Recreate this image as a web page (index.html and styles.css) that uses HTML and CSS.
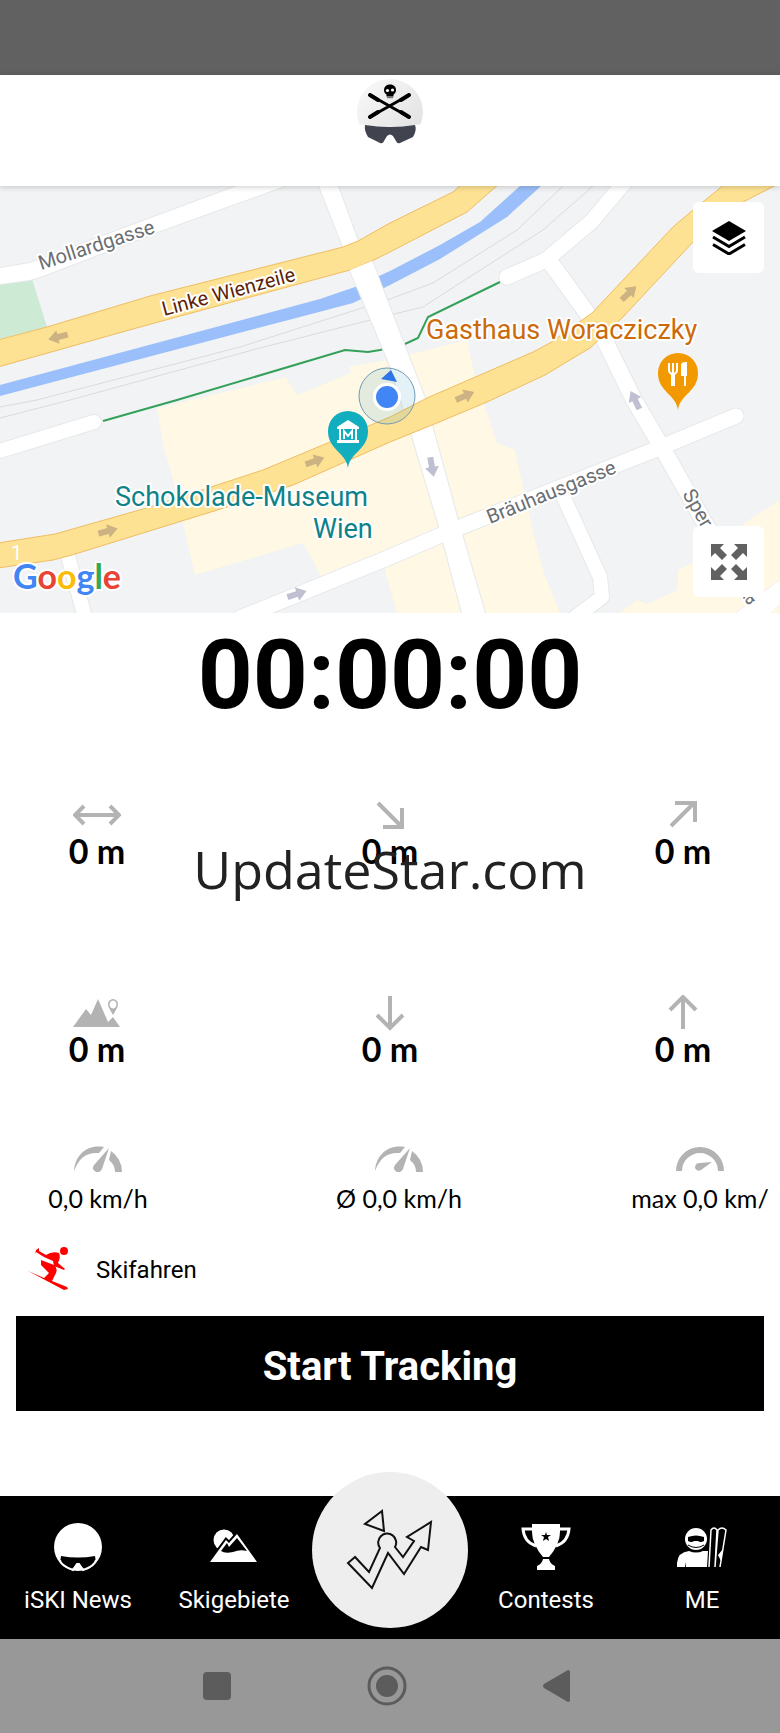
FILE: index.html
```
<!DOCTYPE html>
<html lang="de">
<head>
    <meta charset="UTF-8">
    <meta name="viewport" content="width=device-width, initial-scale=1.0">
    <title>iSKI Tracker</title>
    <link rel="stylesheet" href="styles.css">
</head>
<body>

    <div class="status-bar"></div>

    <header class="header">
        <svg class="logo" viewBox="0 0 66 68" role="img" aria-label="iSKI">
            <defs>
                <linearGradient id="logo-bg" x1="0" y1="0" x2="1" y2="1">
                    <stop offset="0" stop-color="#fafafa"/>
                    <stop offset="1" stop-color="#dedede"/>
                </linearGradient>
            </defs>
            <circle cx="33" cy="34" r="33" fill="url(#logo-bg)"/>
            <path d="M0 46q33 5 66 0v22H0z" fill="#fff"/>
            <path d="M13 17l39 22M52 17L13 39" stroke="#000" stroke-width="3" stroke-linecap="round"/>
            <path d="M13 17l8 5M52 17l-8 5M13 39l8-5M52 39l-8-5" stroke="#000" stroke-width="4" stroke-linecap="round"/>
            <path d="M33 6.500c4 0 6 2.500 6 5.500 0 2-1 3.500-2.500 4.500v2h-7v-2C28 15.500 27 14 27 12c0-3 2-5.500 6-5.500z" fill="#000"/>
            <circle cx="30.500" cy="12.500" r="1.600" fill="#fff"/>
            <circle cx="35.500" cy="12" r="1.600" fill="#fff"/>
            <path d="M30 19.500h6" stroke="#777" stroke-width="1.500"/>
            <path d="M8 47q25 4 50 0 2 5-2 12l-13 6q-3 1-4-2l-3-5q-3-3-6 0l-3 5q-1 3-4 2l-12-6q-4-7-3-12z" fill="#41434f"/>
        </svg>
    </header>

    <main>
        <section class="map">
            <svg class="map-canvas" viewBox="0 0 780 427" role="img" aria-label="Karte">
                <rect width="780" height="427" fill="#f1f3f4"/>

                <!-- built-up areas -->
                <g fill="#fef8e4">
                    <path d="M157 222L287 191 383 175 467 154 475 191 487 227 497 257 515 264 533 347 545 390 560 427H397L383 378 324 400 317 382 303 357 195 389 172 290 163 258z"/>
                    <path d="M620 427l17-13 10 4 31-14v-20l15-7 60-46 27-17v113z"/>
                </g>
                <path d="M285 190l60-22 6 19-54 22z" fill="#f1f3f4"/>
                <path d="M0 99l32-6 15 48-47 12z" fill="#cdead4"/>

                <!-- rails -->
                <g fill="none" stroke="#d9dbdd" stroke-width="1">
                    <path d="M0 221L37 214 240 161 390 113 433 97 517 44 563 0"/>
                    <path d="M0 232L70 214 260 162 390 129 423 121 457 99 543 44 593 0"/>
                </g>

                <!-- river -->
                <path d="M0 199L320 113 355 101 390 85 440 59 480 36 520 0H541L507 31 440 73 390 99 353 117 300 131 0 210z" fill="#9bbffa"/>

                <path d="M103 235L177 214 345 164 368 166 380 164 405 158 418 152 428 131 500 96" fill="none" stroke="#34a05a" stroke-width="2"/>

                <!-- small streets, grey casing under white -->
                <g fill="none" stroke="#e6e8ea" stroke-linecap="round" stroke-linejoin="round">
                    <path d="M-10 268L94 236" stroke-width="16"/>
                    <path d="M507 91L546 74 592 35 628-8" stroke-width="17"/>
                    <path d="M550 76L600 145 634 214 664 265 712 350" stroke-width="18"/>
                    <path d="M240 432L390 371 448 346 654 264 736 230" stroke-width="17"/>
                    <path d="M564 312L600 391 602 411 570 435" stroke-width="16"/>
                    <path d="M68 370L86 435" stroke-width="16"/>
                    <path d="M736 427L780 394V418L771 427z"/>
                    <path d="M237 0L30 77 0 82V98L30 94 43 90 160 45 285 0zM319 0H338L358 55 372 75 425 212 432 239 458 334 485 427H462L440 344 411 247 390 180 350 84 343 61z" stroke-width="2"/>
                </g>
                <g fill="none" stroke="#fff" stroke-linecap="round" stroke-linejoin="round">
                    <path d="M-10 268L94 236" stroke-width="14"/>
                    <path d="M507 91L546 74 592 35 628-8" stroke-width="15"/>
                    <path d="M550 76L600 145 634 214 664 265 712 350" stroke-width="16"/>
                    <path d="M240 432L390 371 448 346 654 264 736 230" stroke-width="15"/>
                    <path d="M564 312L600 391 602 411 570 435" stroke-width="14"/>
                    <path d="M68 370L86 435" stroke-width="14"/>
                </g>
                <g fill="#fff">
                    <path d="M736 427L780 394V418L771 427z"/>
                    <path d="M237 0L30 77 0 82V98L30 94 43 90 160 45 285 0z"/>
                    <path d="M319 0H338L358 55 372 75 425 212 432 239 458 334 485 427H462L440 344 411 247 390 180 350 84 343 61z"/>
                </g>

                <!-- main roads -->
                <g fill="#fde293" stroke="#f0bd62" stroke-width="1">
                    <path d="M-2 154L47 141 150 110 343 61 358 55 390 37 453 6 462-2H499L467 26 390 66 372 75 350 84 140 141-2 181z"/>
                    <path d="M-2 357L55 348 150 321 263 284 330 256 390 231 427 212 533 166 550 157 592 127 673 41 693 24 725-2H778L743 16 693 56 623 131 590 162 545 189 487 216 432 239 390 256 293 299 227 321 72 369 53 374-2 382z"/>
                </g>
                <path d="M350 84l22-9 8 20-22 9z" fill="#fff"/>

                <!-- one-way arrows -->
                <defs>
                    <path id="arrow" d="M-10-3H0V-7L10 0 0 7V3H-10z"/>
                </defs>
                <g fill="#cdb283">
                    <use href="#arrow" transform="translate(58 151) rotate(166)"/>
                    <use href="#arrow" transform="translate(108 345) rotate(-15)"/>
                    <use href="#arrow" transform="translate(315 275) rotate(-20)"/>
                    <use href="#arrow" transform="translate(465 210) rotate(-23)"/>
                    <use href="#arrow" transform="translate(629 107) rotate(-43)"/>
                </g>
                <g fill="#bfbfd2">
                    <use href="#arrow" transform="translate(432 281) rotate(80)"/>
                    <use href="#arrow" transform="translate(635 214) rotate(-116)"/>
                    <use href="#arrow" transform="translate(297 408) rotate(-18)"/>
                </g>

                <!-- street names -->
                <g class="street">
                    <text transform="translate(41 84) rotate(-18)">Mollardgasse</text>
                    <text class="street-main" transform="translate(164 130) rotate(-15)">Linke Wienzeile</text>
                    <text transform="translate(490 338) rotate(-22)">Bräuhausgasse</text>
                    <text transform="translate(682 308) rotate(60)">Sper</text>
                    <text transform="translate(747 420) rotate(-35)">a</text>
                    <text class="street-number" x="11" y="374">1</text>
                </g>

                <!-- current position -->
                <circle cx="387" cy="210" r="28" fill="#4aa3c4" fill-opacity=".15" stroke="#6f9bb8" stroke-width="1"/>
                <path d="M391 184l6 12-16-3z" fill="#2f75e8"/>
                <circle cx="387" cy="211" r="14" fill="#fff"/>
                <circle cx="387" cy="211" r="11" fill="#4285f4"/>

                <!-- places -->
                <g transform="translate(348 246)">
                    <path d="M0 36C-2 20-20 18-20-1A20 20 0 0 1 20-1C20 18 2 20 0 36z" fill="#12adbf"/>
                    <path d="M-11-5L0-12 11-5v2H9V8h2v3h-22V8h2V-3h-2zM-7-3V8H7V-3z" fill="#fff" fill-rule="evenodd"/>
                    <path d="M-4 7v-8l4 5 4-5v8" fill="none" stroke="#fff" stroke-width="2"/>
                </g>
                <g transform="translate(678 188)">
                    <path d="M0 36C-2 20-20 18-20-1A20 20 0 0 1 20-1C20 18 2 20 0 36z" fill="#f29900"/>
                    <path d="M-9-11v7q0 3 3 4v12M-5-11v10M-1-11v7q0 3-3 4v12" fill="none" stroke="#fff" stroke-width="2"/>
                    <path d="M7-11v23M4-9q0-2 4-2V1H4z" fill="#fff" stroke="#fff" stroke-width="2"/>
                </g>
                <g class="place">
                    <text class="place-food" x="426" y="153">Gasthaus Woracziczky</text>
                    <text class="place-museum" x="115" y="320">Schokolade-Museum</text>
                    <text class="place-museum" x="313" y="352">Wien</text>
                </g>
                <text class="google" x="13" y="403"><tspan fill="#4285f4">G</tspan><tspan fill="#ea4335">o</tspan><tspan fill="#fbbc04">o</tspan><tspan fill="#4285f4">g</tspan><tspan fill="#34a853">l</tspan><tspan fill="#ea4335">e</tspan></text>
            </svg>

            <button class="map-button map-layers" type="button" aria-label="Ebenen">
                <svg width="34" height="34" viewBox="0 0 34 34">
                    <path d="M17 0l17 10-17 10L0 10z"/>
                    <path d="M1 16l16 9.500L33 16M1 23.500L17 33l16-9.500" fill="none" stroke="#000" stroke-width="3"/>
                </svg>
            </button>
            <button class="map-button map-expand" type="button" aria-label="Vollbild">
                <svg width="36" height="36" viewBox="0 0 36 36" fill="#616161">
                    <path id="corner" d="M0 0h13L9 4l7 7-5 5-7-7-4 4z"/>
                    <use href="#corner" transform="rotate(90 18 18)"/>
                    <use href="#corner" transform="rotate(180 18 18)"/>
                    <use href="#corner" transform="rotate(270 18 18)"/>
                </svg>
            </button>
        </section>

        <div class="timer">00:00:00</div>

        <section class="data">
            <div class="stats">
                <div class="stat">
                    <svg viewBox="0 0 48 36"><path d="M2 18h44M11 9L2 18l9 9M37 9l9 9-9 9"/></svg>
                    <span>0 m</span>
                </div>
                <div class="stat">
                    <svg viewBox="0 0 48 36"><path d="M12 6l23 23M36 11v19H17"/></svg>
                    <span>0 m</span>
                </div>
                <div class="stat">
                    <svg viewBox="0 0 48 36"><path d="M12 29L35 6M16 6h20v19"/></svg>
                    <span>0 m</span>
                </div>
                <div class="stat">
                    <svg class="solid" viewBox="0 0 48 36">
                        <path d="M0 32L13 14l5 6L25 4l10 23 5-5 7 10z"/>
                        <path d="M40 20l-4-7q-2-4 0-7 4-4 8 0 2 3 0 7zM40 5.500a3.500 4 0 1 0 .1 0z" fill-rule="evenodd"/>
                    </svg>
                    <span>0 m</span>
                </div>
                <div class="stat">
                    <svg viewBox="0 0 48 36"><path d="M24 1v32M11 20l13 13 13-13"/></svg>
                    <span>0 m</span>
                </div>
                <div class="stat">
                    <svg viewBox="0 0 48 36"><path d="M24 34V2M11 15L24 2l13 13"/></svg>
                    <span>0 m</span>
                </div>
            </div>
            <p class="watermark">UpdateStar.com</p>
        </section>

        <div class="speeds">
            <div class="speed">
                <svg viewBox="0 0 48 26">
                    <path id="gauge" d="M0 25C1 9 13-2 30 1l-5 6C12 6 5 12 0 25zM35 2l-7 21q-2 4-6 3-5-2-2-7zM37 5q11 8 11 21h-7q0-7-6-12z"/>
                </svg>
                <span>0,0 km/h</span>
            </div>
            <div class="speed">
                <svg viewBox="0 0 48 26"><use href="#gauge"/></svg>
                <span>Ø 0,0 km/h</span>
            </div>
            <div class="speed">
                <svg viewBox="0 0 48 26">
                    <path d="M0 25a24 24 0 0 1 48 0h-6a18 18 0 0 0-36 0zM36 16l-11 8q-4 2-6-2 0-5 5-5z"/>
                </svg>
                <span>max 0,0 km/</span>
            </div>
        </div>

        <button class="sport" type="button">
            <svg viewBox="0 0 42 44" fill="#f00">
                <circle cx="36" cy="5" r="4"/>
                <path d="M8 4l3-2v3l7 4q6-4 13-2 2 4-1 10l7 6-1 1-10-4-1-5-9-4-8-5-1 2z"/>
                <path d="M13 14l13 5q4 3 2 8l-4 8 15 6 1 2-4 1L0 25l16 7 5-5-8-8z"/>
            </svg>
            <span>Skifahren</span>
        </button>

        <button class="start" type="button">Start Tracking</button>
    </main>

    <nav class="nav">
        <a href="#news">
            <svg viewBox="0 0 50 50">
                <circle cx="25" cy="25" r="24" fill="#fff"/>
                <path d="M8 34q17 3 34 0l1 7-11 7-5-5q-2-2-4 0l-5 5-11-7z" fill="#000"/>
                <path d="M7 38q0 5 13 10l4-6h2l4 6q12-4 13-10" fill="none" stroke="#fff" stroke-width="2"/>
            </svg>
            iSKI News
        </a>
        <a href="#resorts">
            <svg viewBox="0 0 50 50">
                <circle cx="15" cy="18" r="10.500" fill="#fff"/>
                <path d="M1 40l16-22 3 3 8-9 20 28z" fill="#fff" stroke="#000" stroke-width="4" paint-order="stroke"/>
                <path d="M12 29l6-8 2 4 8-9 10 13q-7-2-14 1-8 2-12-1z" fill="#000"/>
            </svg>
            Skigebiete
        </a>
        <a class="nav-track" href="#track" aria-label="Tracking">
            <svg viewBox="0 0 90 84" fill="none" stroke="#111" stroke-width="2">
                <path d="M37 3L20 16l19 7z"/>
                <path d="M10 49l-7 6 24 25 16-35 16 21 17-27 7 3 3-28-24 15 7 4-11 16-8-10a9 9 0 1 0-15 1L24 64z"/>
            </svg>
        </a>
        <a href="#contests">
            <svg viewBox="0 0 50 50" fill="#fff">
                <path d="M11 2h28v8q0 12-11 25h-6Q11 22 11 10z"/>
                <path d="M11 7H2q1 13 13 17M39 7h9q-1 13-13 17" fill="none" stroke="#fff" stroke-width="3"/>
                <path d="M22 37h6q1 5 6 7v4H16v-4q5-2 6-7z"/>
                <path d="M25 10l1 3h4l-3 2 1 4-3-2-3 2 1-4-3-2h4z" fill="#000"/>
            </svg>
            Contests
        </a>
        <a href="#me">
            <svg viewBox="0 0 50 50" fill="#fff">
                <circle cx="19" cy="17" r="11"/>
                <path d="M11 15q8-3 16 0v4q-4 2-6 0h-4q-2 2-6 0z" fill="#000"/>
                <path d="M11 23q8 5 16 0" fill="none" stroke="#000" stroke-width="1"/>
                <path d="M0 45V41q1-11 12-12 7 3 14 0h5l-1 16H9v-5l-1 5z"/>
                <path d="M32 45l2-37q3-4 6 0l-2 37M38 45l3-37q4-4 8 0l-6 37" fill="none" stroke="#fff" stroke-width="1.500"/>
                <path d="M41 33l5-6-2 12z"/>
            </svg>
            ME
        </a>
    </nav>

    <div class="system-bar">
        <button type="button" aria-label="Letzte Apps">
            <svg viewBox="0 0 40 40"><rect x="6" y="6" width="28" height="28" rx="4"/></svg>
        </button>
        <button type="button" aria-label="Startseite">
            <svg viewBox="0 0 40 40"><circle cx="20" cy="20" r="18" fill="none" stroke="#5c5c5c" stroke-width="3"/><circle cx="20" cy="20" r="11"/></svg>
        </button>
        <button type="button" aria-label="Zurück">
            <svg viewBox="0 0 40 40"><path d="M7 18L31 4q2 0 2 2v28q0 2-2 2L7 22q-2-2 0-4z"/></svg>
        </button>
    </div>

</body>
</html>
```
FILE: styles.css
```
* {
    box-sizing: border-box;
}

body {
    font-family: Roboto, sans-serif;
    background-color: #fff;
    color: #000;
    margin: 0;
    padding: 0;
}

button {
    border: none;
    padding: 0;
    font: inherit;
    cursor: pointer;
}

svg {
    display: block;
}

.status-bar {
    height: 75px;
    background-color: #616161;
}

.header {
    position: relative;
    z-index: 1;
    display: flex;
    justify-content: center;
    height: 111px;
    padding-top: 3px;
    background-color: #fff;
    box-shadow: 0 1px 6px rgba(0, 0, 0, 0.2);
}

.logo {
    width: 66px;
    height: 68px;
}

/* map */
.map {
    position: relative;
}

.map-canvas {
    width: 100%;
    height: auto;
}

.map text {
    paint-order: stroke;
    stroke: #fff;
    stroke-width: 4px;
    stroke-linejoin: round;
}

.street {
    font-size: 20px;
    fill: #6b6e72;
}

.map .street-main {
    fill: #5c1f0a;
}

.map .street-number {
    fill: #fff;
    stroke: none;
}

.place {
    font-size: 27px;
}

.place-food {
    fill: #cc6a0a;
}

.place-museum {
    fill: #0f8289;
}

.google {
    font-family: Lato, sans-serif;
    font-size: 34px;
    font-weight: 700;
}

.map-button {
    position: absolute;
    right: 16px;
    display: flex;
    align-items: center;
    justify-content: center;
    width: 71px;
    height: 71px;
    border-radius: 6px;
    background-color: #fff;
}

.map-layers {
    top: 16px;
}

.map-expand {
    bottom: 16px;
}

.timer {
    padding-top: 14px;
    font-size: 96px;
    font-weight: 700;
    line-height: 96px;
    text-align: center;
}

/* numbers */
.data {
    position: relative;
    padding-top: 74px;
}

.stats {
    display: grid;
    grid-template-columns: repeat(3, 194px);
    justify-content: space-between;
    row-gap: 126px;
}

.stat,
.speed {
    display: flex;
    flex-direction: column;
    align-items: center;
}

.stat {
    font-family: Lato, sans-serif;
    font-size: 34px;
    font-weight: 700;
    line-height: 36px;
}

.stat svg {
    width: 48px;
    height: 36px;
    fill: none;
    stroke: #b3b3b3;
    stroke-width: 4px;
}

.stat .solid {
    fill: #b3b3b3;
    stroke: none;
}

.watermark {
    position: absolute;
    top: 110px;
    left: 0;
    right: 0;
    margin: 0;
    color: #222;
    font-family: "Open Sans", sans-serif;
    font-size: 52px;
    line-height: 72px;
    text-align: center;
}

.speeds {
    display: grid;
    grid-template-columns: 160px 1fr 160px;
    padding: 79px 0 0 18px;
}

.speed {
    gap: 8px;
    font-family: Lato, sans-serif;
    font-size: 25px;
    line-height: 36px;
    white-space: nowrap;
}

.speed svg {
    width: 48px;
    height: 26px;
    fill: #b3b3b3;
}

.sport {
    display: flex;
    align-items: center;
    gap: 26px;
    margin: 30px 0 0 28px;
    background: none;
    color: #000;
    font-size: 24px;
}

.sport svg {
    width: 42px;
    height: 44px;
}

.sport span {
    padding-top: 4px;
}

.start {
    display: block;
    width: calc(100% - 32px);
    height: 95px;
    margin: 26px 16px 0;
    padding-top: 6px;
    background-color: #000;
    color: #fff;
    font-size: 40px;
    font-weight: 700;
}

/* bottom navigation */
.nav {
    display: grid;
    grid-template-columns: repeat(5, 1fr);
    justify-items: center;
    height: 143px;
    margin-top: 85px;
    background-color: #000;
}

.nav a {
    display: flex;
    flex-direction: column;
    align-items: center;
    gap: 14px;
    padding-top: 26px;
    color: #fff;
    font-size: 24px;
    line-height: 28px;
    text-decoration: none;
}

.nav svg {
    width: 50px;
    height: 50px;
}

.nav .nav-track {
    justify-content: center;
    width: 156px;
    height: 156px;
    margin-top: -24px;
    padding: 0;
    border-radius: 50%;
    background-color: #eee;
}

.nav .nav-track svg {
    width: 90px;
    height: 84px;
}

.system-bar {
    display: flex;
    align-items: center;
    justify-content: center;
    gap: 130px;
    height: 94px;
    padding-right: 6px;
    background-color: #989898;
}

.system-bar button {
    background: none;
}

.system-bar svg {
    width: 40px;
    height: 40px;
    fill: #5c5c5c;
}
```
